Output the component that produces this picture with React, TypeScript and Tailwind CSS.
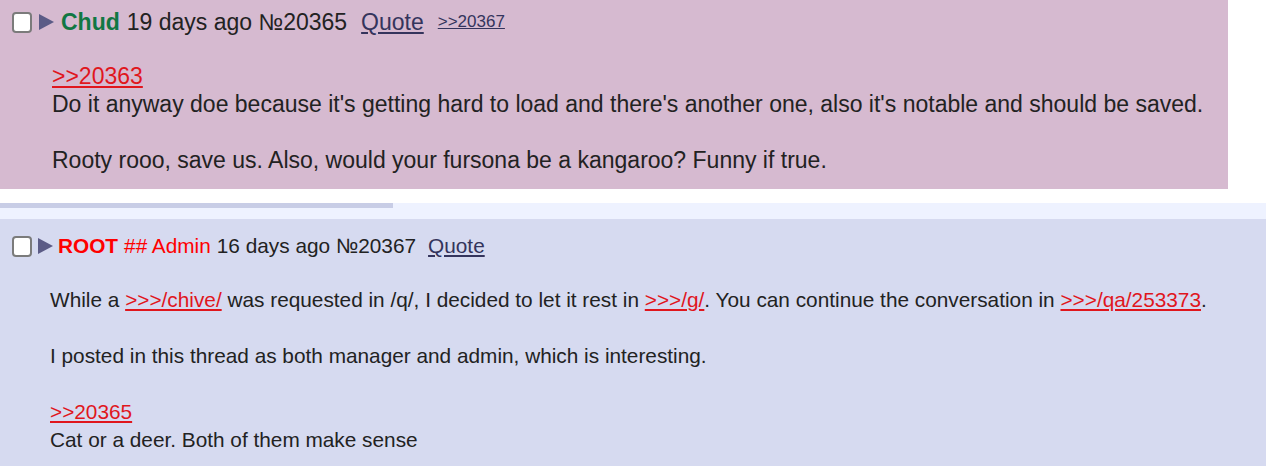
type QuoteLinkProps = {
  children: React.ReactNode;
};

function QuoteLink({ children }: QuoteLinkProps) {
  return <a className="text-[#e0161d] underline">{children}</a>;
}

function Checkbox() {
  return (
    <span className="inline-block h-[21px] w-[20px] shrink-0 rounded-[4px] border-2 border-[#7b7b7b] bg-white" />
  );
}

function Arrow() {
  return (
    <svg width="17" height="18" viewBox="0 0 17 18" className="shrink-0">
      <path d="M1 1 L16 9 L1 17 Z" fill="#5b5b86" />
    </svg>
  );
}

export default function App() {
  return (
    <div className="h-[466px] w-[1266px] overflow-hidden bg-white font-['Liberation_Sans',Arial,sans-serif] leading-[28px] text-[#222]">
      {/* highlighted reply */}
      <div className="h-[189px] w-[1228px] bg-[#d6bad0] pt-[8px] text-[23px]">
        <div className="flex items-center pl-[12px]">
          <Checkbox />
          <span className="ml-[6px]"><Arrow /></span>
          <span className="ml-[6px] font-bold text-[#117743]">Chud</span>
          <span className="ml-[7px]">19 days ago №20365</span>
          <a className="ml-[14px] text-[#34345c] underline">Quote</a>
          <a className="ml-[14px] text-[17px] text-[#34345c] underline">&gt;&gt;20367</a>
        </div>
        <div className="mt-[26px] pl-[52px]">
          <QuoteLink>&gt;&gt;20363</QuoteLink>
          <br />
          Do it anyway doe because it's getting hard to load and there's another one, also it's notable and should be saved.
          <br />
          <br />
          Rooty rooo, save us. Also, would your fursona be a kangaroo? Funny if true.
        </div>
      </div>

      <div className="h-[14px]" />

      <div className="bg-[#eef2ff]">
        <div className="h-[5px] w-[393px] bg-[#c8cde6]" />
        <div className="h-[11px]" />
        <div className="h-[247px] bg-[#d6daf0] pt-[13px] text-[20.8px]">
          <div className="flex items-center pl-[12px]">
            <Checkbox />
            <span className="ml-[5px]"><Arrow /></span>
            <span className="ml-[4px] font-bold text-[#ff0000]">ROOT</span>
            <span className="ml-[6px] text-[#ff0000]">## Admin</span>
            <span className="ml-[6px]">16 days ago №20367</span>
            <a className="ml-[12px] text-[#34345c] underline">Quote</a>
          </div>
          <div className="mt-[26px] pl-[50px]">
            While a <QuoteLink>&gt;&gt;&gt;/chive/</QuoteLink> was requested in /q/, I decided to let it rest in{" "}
            <QuoteLink>&gt;&gt;&gt;/g/</QuoteLink>. You can continue the conversation in{" "}
            <QuoteLink>&gt;&gt;&gt;/qa/253373</QuoteLink>.
            <br />
            <br />
            I posted in this thread as both manager and admin, which is interesting.
            <br />
            <br />
            <QuoteLink>&gt;&gt;20365</QuoteLink>
            <br />
            Cat or a deer. Both of them make sense
          </div>
        </div>
      </div>
    </div>
  );
}
